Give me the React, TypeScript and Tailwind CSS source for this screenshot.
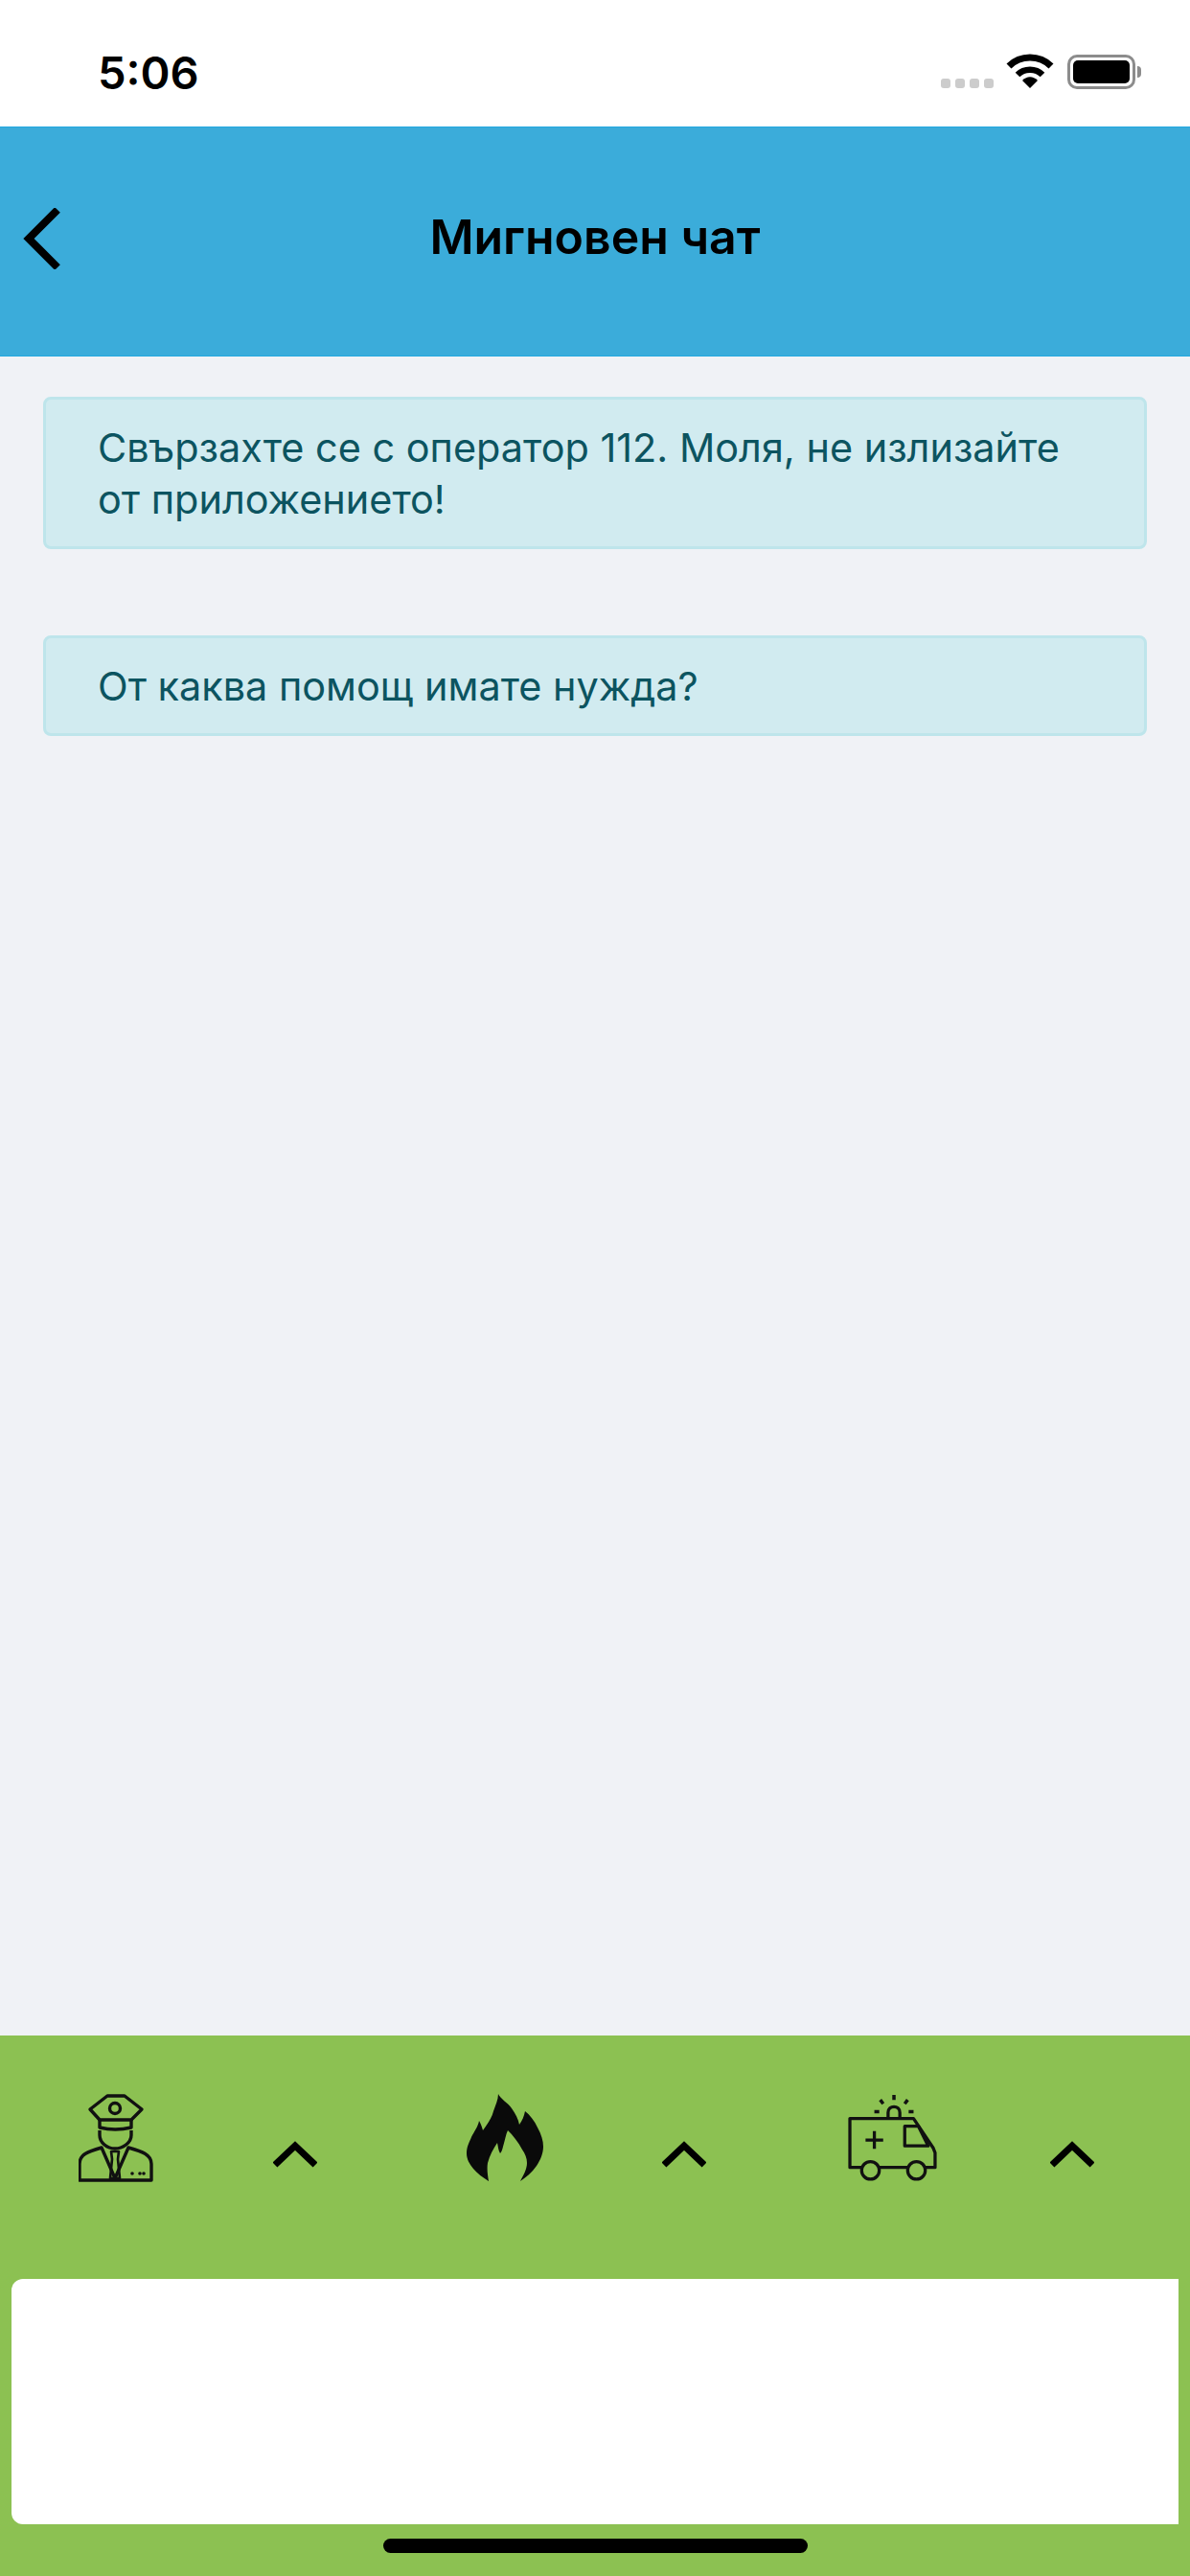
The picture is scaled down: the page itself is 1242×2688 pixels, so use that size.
const FONT = "font-['Inter','Liberation_Sans',sans-serif]"

function StatusIcons() {
  return (
    <div className="flex items-end">
      {/* Signal dots */}
      <div className="mb-[1px] flex gap-[5px]">
        {[0, 1, 2, 3].map(i => (
          <span key={i} className="h-[10px] w-[10px] rounded-[3px] bg-[#cccccc]" />
        ))}
      </div>
      <svg className="ml-[13px]" width="50" height="37" viewBox="0 0 50 37" aria-hidden="true">
        <path d="M3 13C15 1 35 1 47 13" fill="none" stroke="#000" strokeWidth="7" />
        <path d="M12 22C19 15 31 15 38 22" fill="none" stroke="#000" strokeWidth="6.5" />
        <path d="M17 28C22 23 28 23 33 28L25 36Z" fill="#000" />
      </svg>
      <div className="ml-[14px] flex items-center">
        <div className="flex h-[36px] w-[71px] rounded-[10px] border-[3px] border-[#8c8c8c] bg-white p-[3px]">
          <div className="flex-1 rounded-[5px] bg-black" />
        </div>
        <div className="ml-[2px] h-[12px] w-[4px] rounded-r-[4px] bg-[#8c8c8c]" />
      </div>
    </div>
  )
}

function OfficerIcon() {
  return (
    <svg width="78" height="92" viewBox="0 0 78 92" fill="none" stroke="#111" strokeWidth="3.4" strokeLinejoin="round" aria-hidden="true">
      <path d="M12 16L30 2H48L66 16L55 27H22Z" />
      <circle cx="38" cy="15" r="5.5" />
      <path d="M22 27V35Q38 39 55 35V27" />
      <path d="M22 38V43C22 51 30 57 38 57C46 57 55 51 55 43V38" />
      <path d="M1 90V73C1 63 10 60 24 56L38 88L52 56C66 60 76 63 76 73V90Z" />
      <path d="M34 60H42L41 68L43 88H33L35 68Z" strokeWidth="2.6" />
      <circle cx="56" cy="83" r="1.8" fill="#111" stroke="none" />
      <circle cx="64" cy="83" r="1.8" fill="#111" stroke="none" />
      <circle cx="68" cy="83" r="1.8" fill="#111" stroke="none" />
    </svg>
  )
}

function FlameIcon() {
  return (
    <svg width="80" height="92" viewBox="0 0 80 92" aria-hidden="true">
      <path
        fill="#0a0a0a"
        d="M33 0C35 5 43 9 47 15C51 21 54 26 55 32C58 28 60 23 61 18C66 22 71 28 74 35C78 42 80 49 80 55C80 62 77 69 73 75C68 82 62 87 56 91C59 85 63 79 63 72C63 67 61 62 58 58C54 50 48 43 43 38C41 42 40 48 38 55C37 59 36 61 35 62C33 59 33 55 32 51C28 57 24 64 22 72C21 78 22 85 23 91C17 87 11 83 7 78C3 73 0 68 0 62C0 55 3 50 5 45C8 39 12 34 13 28C15 31 16 35 17 38C21 32 26 26 28 18C30 12 33 6 33 0Z"
      />
    </svg>
  )
}

function AmbulanceIcon() {
  return (
    <svg width="96" height="92" viewBox="0 0 92 90" fill="none" stroke="#111" strokeWidth="3.2" strokeLinejoin="round" aria-hidden="true">
      <path d="M14 75H2V25H67L87 55L89 60V75H79M61 75H32" />
      <circle cx="23" cy="78" r="9" />
      <circle cx="70" cy="78" r="9" />
      <path d="M58 33H72L82 53H58Z" />
      <path d="M27 38V56M18 47H36" />
      <path d="M41 25V19C41 11 53 11 53 19V25" />
      <path d="M47 1V6M33 6L36 10M61 6L58 10M27 18H32M62 18H67" strokeWidth="3.4" />
    </svg>
  )
}

function Chevron() {
  return (
    <svg width="46" height="28" viewBox="0 0 46 28" fill="none" stroke="#000" strokeWidth="7" aria-hidden="true">
      <path d="M2 25L23 5L44 25" />
    </svg>
  )
}

const services = [
  { id: 'police', icon: <OfficerIcon /> },
  { id: 'fire', icon: <FlameIcon /> },
  { id: 'ambulance', icon: <AmbulanceIcon /> },
]

const messages = ['Свързахте се с оператор 112. Моля, не излизайте от приложението!', 'От каква помощ имате нужда?']

export default function App() {
  return (
    <div className={`flex h-[2688px] w-[1242px] flex-col overflow-hidden bg-[#f0f2f6] ${FONT}`}>
      {/* Status bar */}
      <div className="flex h-[132px] items-start justify-between bg-white pl-[102px] pr-[51px] pt-[56px]">
        <span className="mt-[2px] text-[47px] leading-[36px] font-semibold text-black">5:06</span>
        <StatusIcons />
      </div>

      {/* Header */}
      <header className="relative flex h-[240px] items-center justify-center border-y-[1px] border-y-[#22a8e0] bg-[#3bacda]">
        <svg className="absolute left-[24px] top-[84px]" width="40" height="64" viewBox="0 0 40 64" fill="none" stroke="#000" strokeWidth="8" aria-hidden="true">
          <path d="M36 2L6 32L36 62" />
        </svg>
        <h1 className="mb-[10px] text-[50px] font-semibold text-black">Мигновен чат</h1>
      </header>

      {/* Messages */}
      <main className="flex flex-1 flex-col gap-[90px] px-[45px] pt-[42px]">
        {messages.map(text => (
          <div key={text} className="rounded-[8px] border-[3px] border-[#bee5eb] bg-[#d1ebf0] pb-[22px] pl-[54px] pr-[70px] pt-[23px] text-[41.4px] leading-[54px] text-[#0c5460]">
            {text}
          </div>
        ))}
      </main>

      {/* Bottom panel */}
      <footer className="flex h-[564px] flex-col bg-[#8cc152]">
        <div className="flex h-[254px] items-start pl-[71px] pt-[61px]">
          {services.map(s => (
            <div key={s.id} className="flex w-[405.5px] shrink-0 items-start">
              <div className="flex h-[92px] w-[100px] items-center justify-center">{s.icon}</div>
              <div className="ml-[114px] mt-[49px]">
                <Chevron />
              </div>
            </div>
          ))}
        </div>
        <div className="mx-[12px] h-[256px] rounded-l-[12px] bg-white" />
        <div className="mx-auto mt-[15px] h-[15px] w-[443px] rounded-full bg-black" />
      </footer>
    </div>
  )
}
